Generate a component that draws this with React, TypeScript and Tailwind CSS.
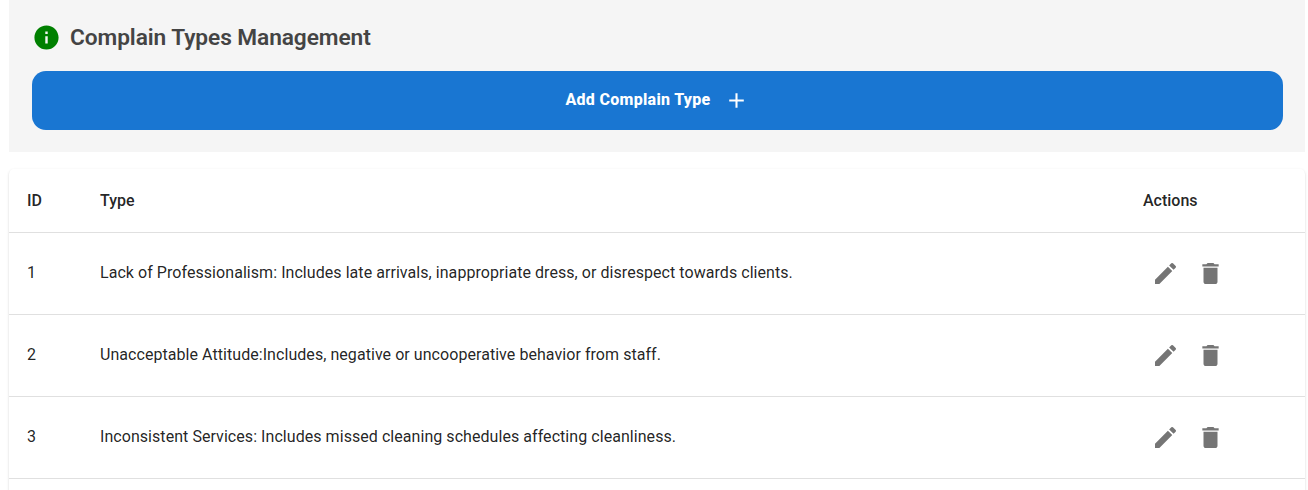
import { MdAdd, MdDelete, MdEdit, MdInfo } from "react-icons/md";

const rows = [
  { id: 1, type: "Lack of Professionalism: Includes late arrivals, inappropriate dress, or disrespect towards clients." },
  { id: 2, type: "Unacceptable Attitude:Includes, negative or uncooperative behavior from staff." },
  { id: 3, type: "Inconsistent Services: Includes missed cleaning schedules affecting cleanliness." },
];

export default function App() {
  return (
    <div className="h-[490px] overflow-hidden bg-white pl-[9px] pr-[3px] font-['Roboto',sans-serif] text-black/87">
      <header className="h-[152px] bg-[#f5f5f5] pl-[23px] pr-[22px] pt-[22px]">
        <h1 className="flex h-[30px] items-center text-[22.7px] font-semibold tracking-[-0.08px] text-[#444444]">
          <MdInfo className="mr-[9px] size-[29px] text-[#008000]" />
          <span className="pt-0.5">Complain Types Management</span>
        </h1>
        <button className="mt-[19px] flex h-[59px] w-full items-center justify-center rounded-[14px] bg-[#1976d2] pb-0.5 text-base font-extrabold tracking-[0.3px] text-white">
          <span>Add Complain Type</span>
          <MdAdd className="ml-[13px] mr-px size-[25px] translate-y-px" />
        </button>
      </header>
      <main className="mt-[17px] rounded-t-[5px] shadow-[0_2px_1px_-1px_rgba(0,0,0,0.2),0_1px_1px_rgba(0,0,0,0.14),0_1px_3px_rgba(0,0,0,0.12)]">
        <div className="flex h-16 items-center border-b border-[#e0e0e0] pl-[18px] font-medium">
          <div className="w-[73px]">ID</div>
          <div className="w-[1043px]">Type</div>
          <div>Actions</div>
        </div>
        {rows.map((r) => (
          <div key={r.id} className="flex h-[82px] items-center border-b border-[#e0e0e0] pl-[18px]">
            <div className="w-[73px] pb-0.5">{r.id}</div>
            <div className="w-[1043px] pb-0.5 tracking-[0.055px]">{r.type}</div>
            <div className="flex gap-[17px] pl-2 text-[#757575]">
              <MdEdit className="size-7 translate-x-[0.5px] -translate-y-[0.5px]" />
              <MdDelete className="size-7 translate-x-[0.5px] -translate-y-[0.5px]" />
            </div>
          </div>
        ))}
        <div className="h-[82px]" />
      </main>
    </div>
  );
}
